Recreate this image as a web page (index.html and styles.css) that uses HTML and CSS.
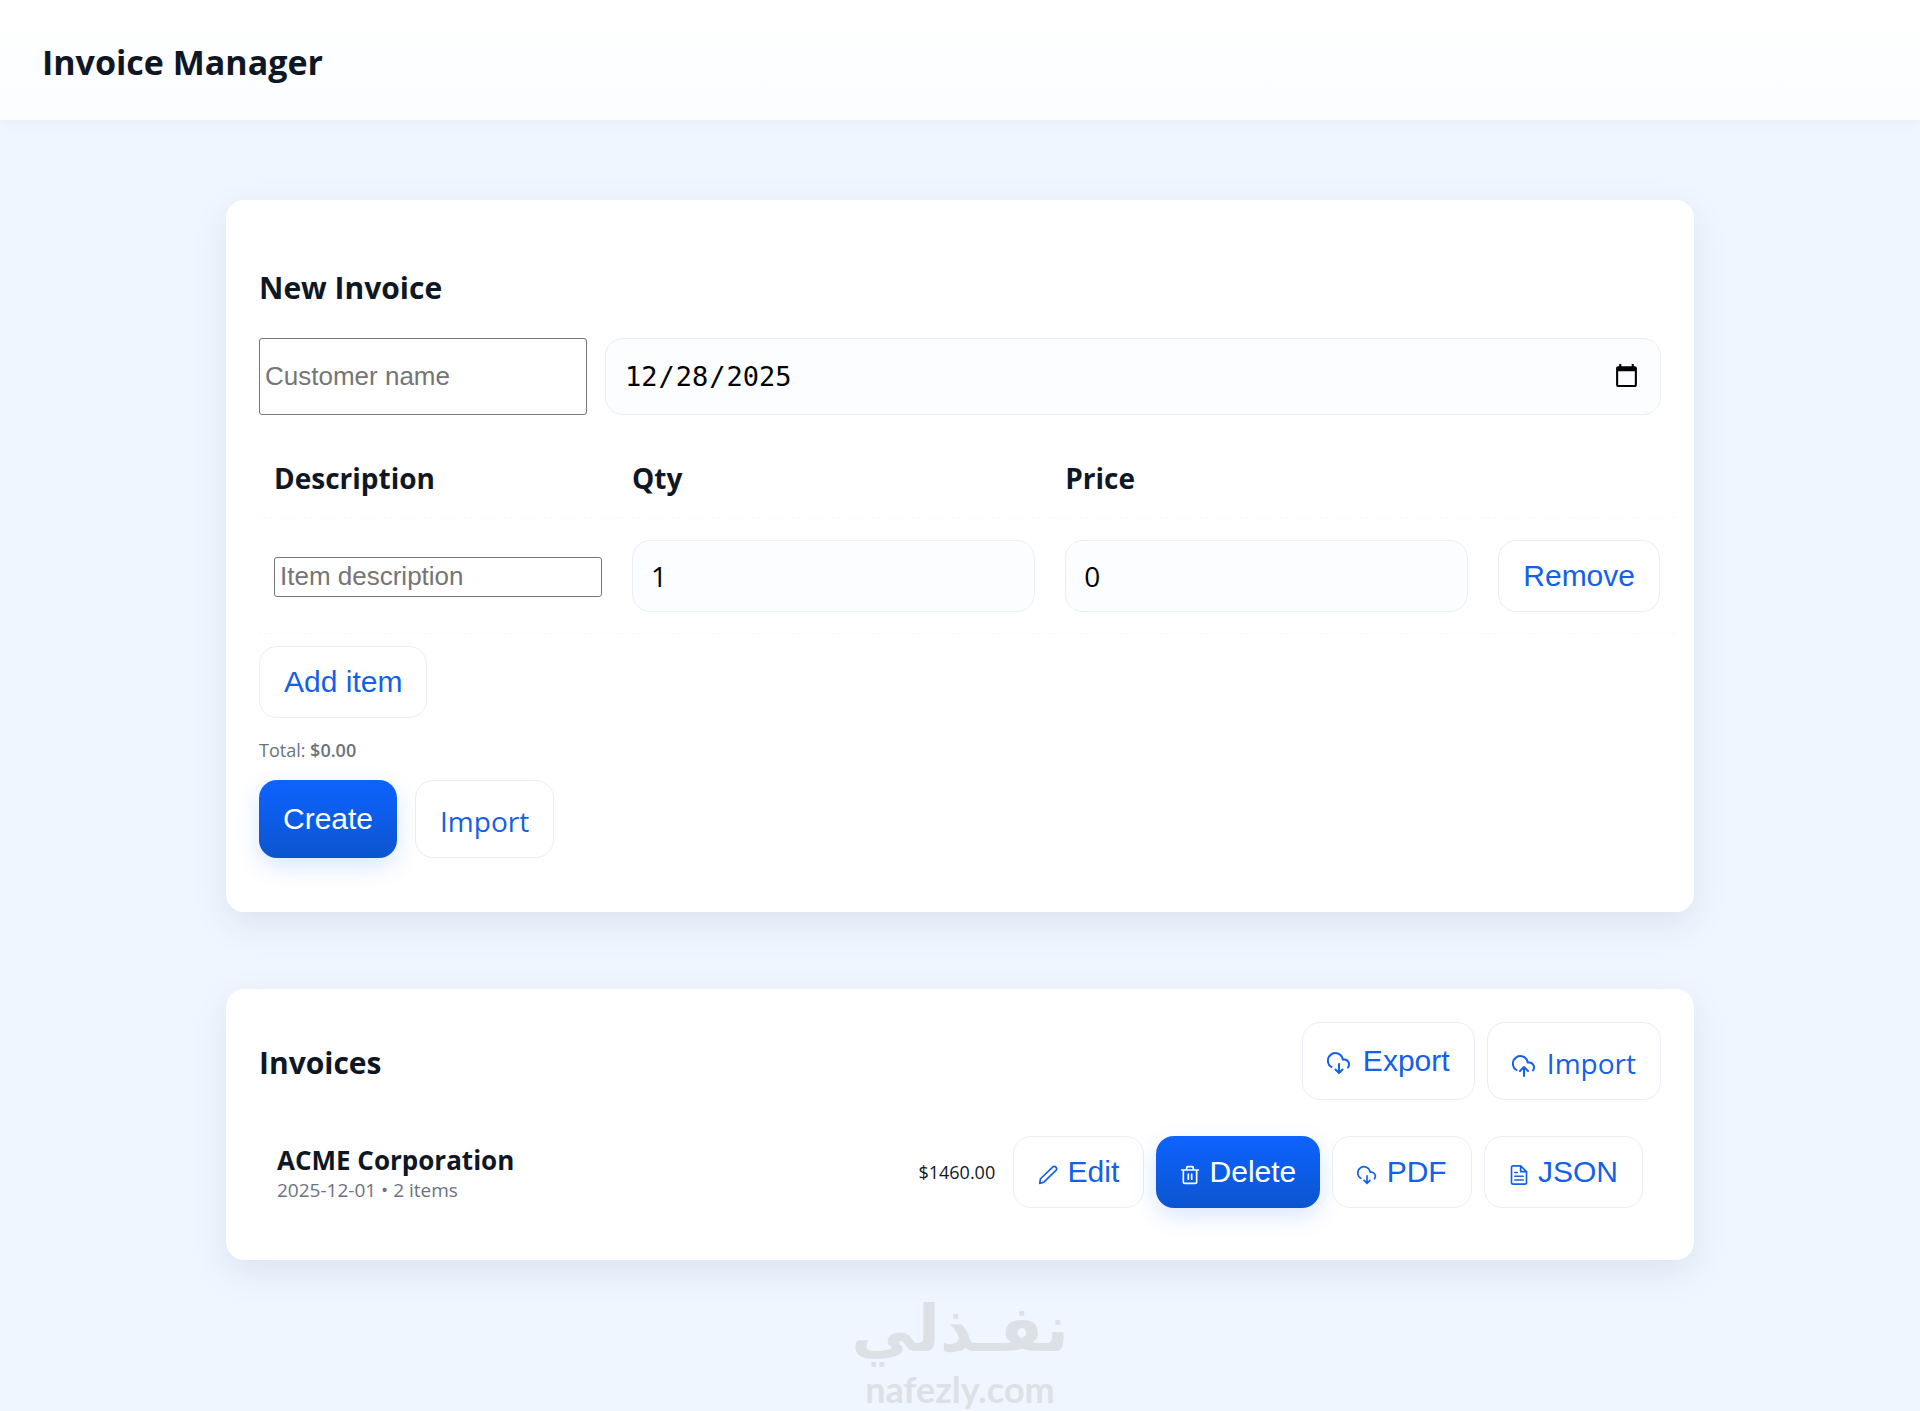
FILE: index.html
```html
<!DOCTYPE html>
<html lang="en">
<head>
  <meta charset="UTF-8">
  <meta name="viewport" content="width=device-width, initial-scale=1">
  <title>Invoice Manager</title>
  <link rel="stylesheet" href="styles.css">
</head>
<body>
  <header class="topbar">
    <h1>Invoice Manager</h1>
  </header>

  <main class="container">
    <section class="card">
      <h2 class="form-title">New Invoice</h2>
      <form>
        <div class="form-row">
          <input type="text" class="text-input" placeholder="Customer name" aria-label="Customer name">
          <input type="date" class="field date-field" value="2025-12-28" aria-label="Invoice date">
        </div>

        <table class="items">
          <thead>
            <tr>
              <th>Description</th>
              <th>Qty</th>
              <th>Price</th>
              <th></th>
            </tr>
          </thead>
          <tbody>
            <tr>
              <td><input type="text" class="text-input" placeholder="Item description" aria-label="Item description"></td>
              <td><input type="number" class="field" value="1" aria-label="Qty"></td>
              <td><input type="number" class="field" value="0" aria-label="Price"></td>
              <td><button type="button" class="btn">Remove</button></td>
            </tr>
          </tbody>
        </table>

        <button type="button" class="btn">Add item</button>
        <p class="total">Total: <strong>$0.00</strong></p>
        <div class="form-actions">
          <button type="submit" class="btn primary">Create</button>
          <label class="btn file-btn">Import<input type="file" hidden></label>
        </div>
      </form>
    </section>

    <section class="card">
      <div class="list-header">
        <h2>Invoices</h2>
        <div class="actions">
          <button type="button" class="btn">
            <svg class="icon large" viewBox="0 0 24 24"><path d="M4.500 16A7.500 7.500 0 1 1 15.800 8.500H17.500a5 5 0 0 1 3.500 8M12 13v9M8.500 18.500l3.500 3.500 3.500-3.500"/></svg>
            Export
          </button>
          <label class="btn file-btn">
            <svg class="icon large" viewBox="0 0 24 24"><path d="M4.500 16A7.500 7.500 0 1 1 15.800 8.500H17.500a5 5 0 0 1 3.500 8M12 22v-9M8 17l4-4 4 4"/></svg>
            Import<input type="file" hidden>
          </label>
        </div>
      </div>

      <div class="invoice">
        <div class="invoice-info">
          <div class="customer">ACME Corporation</div>
          <div class="meta">2025-12-01 • 2 items</div>
        </div>
        <span class="amount">$1460.00</span>
        <div class="actions">
          <button type="button" class="btn">
            <svg class="icon" viewBox="0 0 24 24"><path d="M2 22l1-5.500L17.500 2.500a2.600 2.600 0 0 1 4 4L7 20.500z"/></svg>
            Edit
          </button>
          <button type="button" class="btn primary">
            <svg class="icon" viewBox="0 0 24 24"><path d="M2 6h20M4 6v14a2 2 0 0 0 2 2h12a2 2 0 0 0 2-2V6M8 6V3.500A1.500 1.500 0 0 1 9.500 2h5A1.500 1.500 0 0 1 16 3.500V6M10 11v6M14 11v6"/></svg>
            Delete
          </button>
          <button type="button" class="btn">
            <svg class="icon" viewBox="0 0 24 24"><path d="M4.500 16A7.500 7.500 0 1 1 15.800 8.500H17.500a5 5 0 0 1 3.500 8M12 13v9M8.500 18.500l3.500 3.500 3.500-3.500"/></svg>
            PDF
          </button>
          <button type="button" class="btn">
            <svg class="icon" viewBox="0 0 24 24"><path d="M14 1H5a2 2 0 0 0-2 2v18a2 2 0 0 0 2 2h14a2 2 0 0 0 2-2V8zM14 1v7h7M7 9h3M7 13.500h10M7 18h10"/></svg>
            JSON
          </button>
        </div>
      </div>
    </section>
  </main>

  <footer class="brand">
    <div class="brand-name" lang="ar" dir="rtl">نفـذلي</div>
    <div class="brand-site">nafezly.com</div>
  </footer>
</body>
</html>
```
FILE: styles.css
```css
* {
  box-sizing: border-box;
}

body {
  margin: 0;
  background: #eff6ff;
  color: #0f1724;
  font-family: "Segoe UI", "Open Sans", sans-serif;
  font-size: 28px;
}

h1,
h2,
p {
  margin: 0;
}

.topbar {
  padding: 38px 42px 34px;
  background: linear-gradient(#ffffff, #fbfdff);
  box-shadow: 0 2px 12px rgba(15, 23, 36, 0.04);
}

h1 {
  font-size: 34px;
  line-height: 48px;
}

h2 {
  font-size: 30px;
  line-height: 40px;
}

.container {
  max-width: 1468px;
  margin: 80px auto 0;
}

.card {
  margin-bottom: 77px;
  padding: 33px;
  background: #ffffff;
  border-radius: 18px;
  box-shadow: 0 12px 36px rgba(20, 40, 90, 0.09);
}

.form-title {
  padding-top: 35px;
  margin-bottom: 30px;
}

.form-row {
  display: flex;
  gap: 18px;
  margin-bottom: 23px;
}

.text-input {
  width: 328px;
  height: 40px;
  padding: 1px 5px;
  border: 1px solid #767676;
  border-radius: 3px;
  font-family: Arial, "Liberation Sans", sans-serif;
  font-size: 26px;
}

.text-input::placeholder {
  color: #757575;
}

.form-row .text-input {
  height: auto;
}

.field {
  display: block;
  width: 100%;
  height: 72px;
  padding: 0 18px;
  border: 1px solid #e9eff6;
  border-radius: 18px;
  background: #fbfdff;
  color: #000000;
  font-family: "Segoe UI", "Open Sans", sans-serif;
  font-size: 28px;
}

.date-field {
  flex: 1;
  height: 77px;
  font-family: Consolas, "DejaVu Sans Mono", monospace;
  font-size: 27px;
}

/* runs past the card padding so the last button lines up with the fields */
.items {
  width: calc(100% + 14px);
  margin-bottom: 12px;
  border-collapse: collapse;
}

.items th,
.items td {
  padding: 22px 15px 21px;
  border-bottom: 1px dashed #f7fafc;
  text-align: left;
}

.items th {
  line-height: 36px;
}

.items th:nth-child(1),
.items th:nth-child(4) {
  width: 1px;
}

.btn {
  display: inline-block;
  padding: 18px 24px;
  border: 1px solid #e9eef6;
  border-radius: 18px;
  background: #ffffff;
  color: #1560e8;
  font-family: Arial, "Liberation Sans", sans-serif;
  font-size: 30px;
  line-height: 34px;
  white-space: nowrap;
}

.primary {
  padding: 19px 24px;
  border: 0;
  background: linear-gradient(#0d63ff, #0b55cf);
  box-shadow: 0 8px 24px rgba(13, 99, 255, 0.16);
  color: #ffffff;
}

.file-btn {
  padding: 20px 24px 16px;
  font-family: "Segoe UI", "Open Sans", sans-serif;
  font-size: 28px;
  line-height: 40px;
}

.total {
  margin: 18px 0 16px;
  color: #6b7280;
  font-size: 18px;
  line-height: 28px;
}

.total strong {
  font-weight: 600;
}

.form-actions {
  display: flex;
  gap: 18px;
  padding-bottom: 21px;
}

.list-header {
  display: flex;
  justify-content: space-between;
  align-items: center;
  margin-bottom: 18px;
}

.list-header h2 {
  padding-top: 4px;
}

.actions {
  display: flex;
  gap: 12px;
}

.icon {
  width: 20px;
  height: 20px;
  margin-right: 1px;
  vertical-align: -3px;
  fill: none;
  stroke: currentColor;
  stroke-width: 2;
  stroke-linecap: round;
  stroke-linejoin: round;
}

.icon.large {
  width: 24px;
  height: 24px;
  margin-right: 4px;
  vertical-align: -4px;
}

.invoice {
  display: flex;
  align-items: center;
  padding: 18px 18px 19px;
}

.invoice-info {
  flex: 1;
  padding-top: 2px;
}

.customer {
  font-size: 26px;
  font-weight: 700;
  line-height: 34px;
}

.meta {
  color: #6b7280;
  font-size: 19px;
  line-height: 26px;
}

.amount {
  margin-right: 18px;
  font-size: 18px;
}

.brand {
  margin-top: -46px;
  color: #dde1e5;
  font-weight: 700;
  text-align: center;
}

.brand-name {
  font-family: "DejaVu Sans", sans-serif;
  font-size: 64px;
  line-height: 76px;
}

.brand-site {
  font-family: Lato, sans-serif;
  font-size: 36px;
  line-height: 44px;
}
```
